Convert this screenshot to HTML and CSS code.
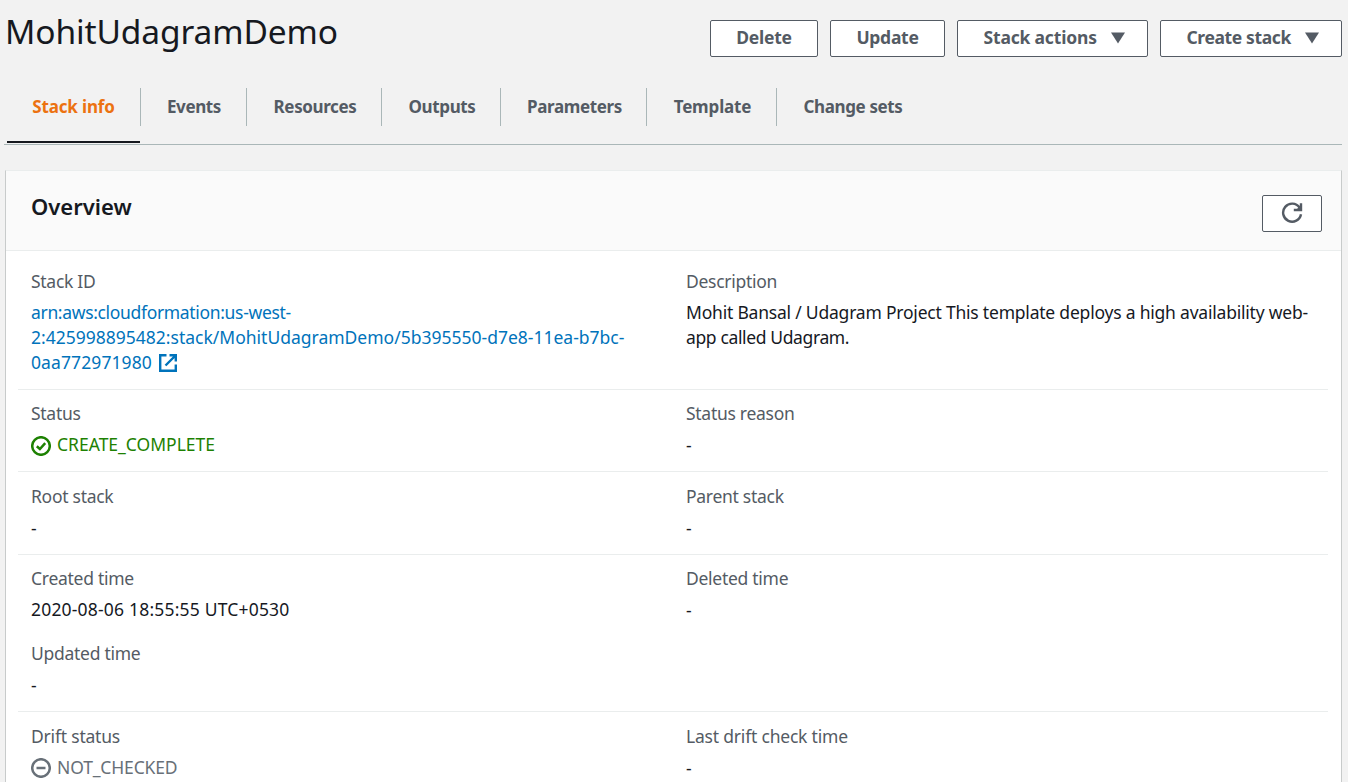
FILE: index.html
```html
<!DOCTYPE html>
<html lang="en">
<head>
<meta charset="utf-8">
<title>MohitUdagramDemo</title>
<link rel="stylesheet" href="styles.css">
</head>
<body>
<header class="header">
  <h1 class="title">MohitUdagramDemo</h1>
  <div class="actions">
    <button class="btn btn-delete">Delete</button>
    <button class="btn btn-update">Update</button>
    <button class="btn btn-menu btn-stack"><span>Stack actions</span><svg class="caret" viewBox="0 0 14 12"><path d="M0 0.500h14L7 11.500z"/></svg></button>
    <button class="btn btn-menu btn-create"><span>Create stack</span><svg class="caret" viewBox="0 0 14 12"><path d="M0 0.500h14L7 11.500z"/></svg></button>
  </div>
</header>
<nav class="tabs">
  <a class="tab tab-info active"><span>Stack info</span></a>
  <a class="tab tab-events"><span>Events</span></a>
  <a class="tab tab-resources"><span>Resources</span></a>
  <a class="tab tab-outputs"><span>Outputs</span></a>
  <a class="tab tab-parameters"><span>Parameters</span></a>
  <a class="tab tab-template"><span>Template</span></a>
  <a class="tab tab-changes"><span>Change sets</span></a>
</nav>
<main class="panel">
  <div class="panel-head">
    <h2 class="panel-title">Overview</h2>
    <button class="btn refresh" aria-label="Refresh"><svg viewBox="0 0 22 22"><path d="M18.500 5.500A9 9 0 1 0 20 12.200M20 1.200V8H12.800"/><path class="refresh-head" d="M20 3V8H15z"/></svg></button>
  </div>
  <div class="rows">
    <section class="row row-first">
      <div class="field">
        <div class="label">Stack ID</div>
        <div class="value link"><span class="arn-region">arn:aws:cloudformation:us-west-</span><br><span>2:425998895482:stack/MohitUdagramDemo/5b395550-d7e8-11ea-b7bc-</span><br><span class="arn-tail">0aa772971980</span><svg class="ext" viewBox="0 0 18 18"><path d="M7.500 1.200H1.200V16.800H16.800V10.500M10.500 1.200H16.800V7.500M16.500 1.500L6.500 11.500"/></svg></div>
      </div>
      <div class="field">
        <div class="label">Description</div>
        <div class="value desc">Mohit Bansal / Udagram Project This template deploys a high availability web-<br><span class="desc-tail">app called Udagram.</span></div>
      </div>
    </section>
    <section class="row">
      <div class="field">
        <div class="label">Status</div>
        <div class="value status ok"><svg class="icon" viewBox="0 0 20 20"><circle cx="10" cy="10" r="8.800"/><path d="M5.800 10.200L8.900 13L14.200 7.200"/></svg><span>CREATE_COMPLETE</span></div>
      </div>
      <div class="field">
        <div class="label">Status reason</div>
        <div class="value none">-</div>
      </div>
    </section>
    <section class="row row-root">
      <div class="field">
        <div class="label">Root stack</div>
        <div class="value none">-</div>
      </div>
      <div class="field">
        <div class="label">Parent stack</div>
        <div class="value none">-</div>
      </div>
    </section>
    <section class="row row-time">
      <div class="stack">
        <div class="field">
          <div class="label">Created time</div>
          <div class="value date">2020-08-06 18:55:55 UTC+0530</div>
        </div>
        <div class="field">
          <div class="label">Updated time</div>
          <div class="value none">-</div>
        </div>
      </div>
      <div class="field">
        <div class="label">Deleted time</div>
        <div class="value none">-</div>
      </div>
    </section>
    <section class="row row-last">
      <div class="field">
        <div class="label">Drift status</div>
        <div class="value status idle"><svg class="icon" viewBox="0 0 20 20"><circle cx="10" cy="10" r="8.800"/><path d="M5.500 10H14.500"/></svg><span>NOT_CHECKED</span></div>
      </div>
      <div class="field">
        <div class="label">Last drift check time</div>
        <div class="value none">-</div>
      </div>
    </section>
  </div>
</main>
</body>
</html>
```
FILE: styles.css
```css
* { box-sizing: border-box; }
html, body { height: 100%; }
body {
  margin: 0;
  overflow: hidden;
  background: #f2f2f2;
  color: #16191f;
  font-family: "Noto Sans", "Open Sans", sans-serif;
  font-size: 17.500px;
  line-height: 25px;
  white-space: nowrap;
}
.header {
  display: flex;
  justify-content: space-between;
  height: 88px;
  padding: 0 6px 0 5px;
}
.title {
  margin: 7px 0 0;
  font-size: 33.500px;
  font-weight: 400;
  line-height: 48px;
  letter-spacing: -0.120px;
}
.actions { display: flex; gap: 12px; margin-top: 20px; height: 37px; }
.btn {
  display: flex;
  align-items: center;
  justify-content: center;
  height: 37px;
  padding: 0 0 2px;
  background: #fff;
  border: 1px solid #545b64;
  border-radius: 2px;
  color: #545b64;
  font: 700 17.500px/25px "Noto Sans", "Open Sans", sans-serif;
  letter-spacing: -0.280px;
}
.btn-delete { width: 108px; }
.btn-update { width: 115px; }
.btn-stack { width: 191px; letter-spacing: -0.180px; }
.btn-create { width: 182px; letter-spacing: -0.380px; }
.btn-menu { justify-content: space-between; padding: 0 22px 2px 25.500px; }
.caret { width: 14px; height: 12px; fill: #545b64; }
.tabs {
  display: flex;
  height: 57px;
  margin: 0 6px 0 4px;
  padding-left: 3px;
  border-bottom: 1px solid #aab7b8;
}
.tab {
  height: 55px;
  color: #545b64;
  font-size: 17px;
  font-weight: 700;
  letter-spacing: -0.380px;
}
.tab span {
  display: flex;
  align-items: center;
  justify-content: center;
  height: 38px;
  padding: 0 0 1px 2px;
  border-right: 1px solid #aab7b8;
}
.tab:last-child span { border-right: 0; padding-left: 0; }
.active { color: #ec7211; border-bottom: 2px solid #16191f; letter-spacing: -0.150px; }
.tab-info { width: 133px; }
.tab-info span { width: 134px; padding-left: 0; }
.tab-events { width: 107px; }
.tab-resources { width: 135px; }
.tab-outputs { width: 119px; }
.tab-parameters { width: 146px; }
.tab-template { width: 130px; letter-spacing: -0.150px; }
.tab-changes { width: 152px; }
.panel {
  margin: 25px 6px 0 5px;
  height: 640px;
  background: #fff;
  border: 1px solid #c8cbcb;
  border-top-color: #eaeded;
}
.panel-head {
  display: flex;
  justify-content: space-between;
  height: 80px;
  padding: 24px 19px 0 25px;
  background: #fafafa;
  border-bottom: 1px solid #eaeded;
}
.panel-title { margin: -4px 0 0; font-size: 22px; line-height: 30px; font-weight: 600; }
.refresh { width: 60px; }
.refresh svg { width: 22px; height: 22px; fill: none; stroke: #545b64; stroke-width: 2.400; }
.refresh .refresh-head { fill: #545b64; stroke: none; }
.rows { padding: 0 13px 0 12px; }
.row {
  display: grid;
  grid-template-columns: 655px 1fr;
  height: 82px;
  padding: 11px 0 0 13px;
  border-bottom: 1px solid #eaeded;
}
.row-first { height: 139px; padding-top: 18px; }
.row-root { height: 83px; padding-top: 12px; }
.row-time { height: 157px; }
.row-last { height: 90px; border: 0; padding-top: 12px; }
.row-last .label { letter-spacing: -0.200px; }
.stack { display: grid; gap: 19px; align-content: start; }
.label { margin-bottom: 6px; color: #545b64; letter-spacing: -0.280px; }
.none { padding-top: 1px; height: 25px; }
.desc { letter-spacing: -0.210px; }
.desc-tail { letter-spacing: -0.370px; }
.date { letter-spacing: 0.190px; }
.link { color: #0073bb; }
.arn-region { letter-spacing: -0.330px; }
.arn-tail { letter-spacing: 0.100px; }
.ext { width: 18px; height: 18px; margin-left: 7px; vertical-align: -3px; fill: none; stroke: #0073bb; stroke-width: 2.400; }
.status { display: flex; align-items: center; gap: 6px; }
.icon { width: 20px; height: 20px; fill: none; stroke: currentColor; stroke-width: 2.500; margin-top: 2px; }
.ok { color: #1d8102; }
.idle { color: #687078; letter-spacing: -0.150px; }
.idle .icon { margin-top: 0; }
```
